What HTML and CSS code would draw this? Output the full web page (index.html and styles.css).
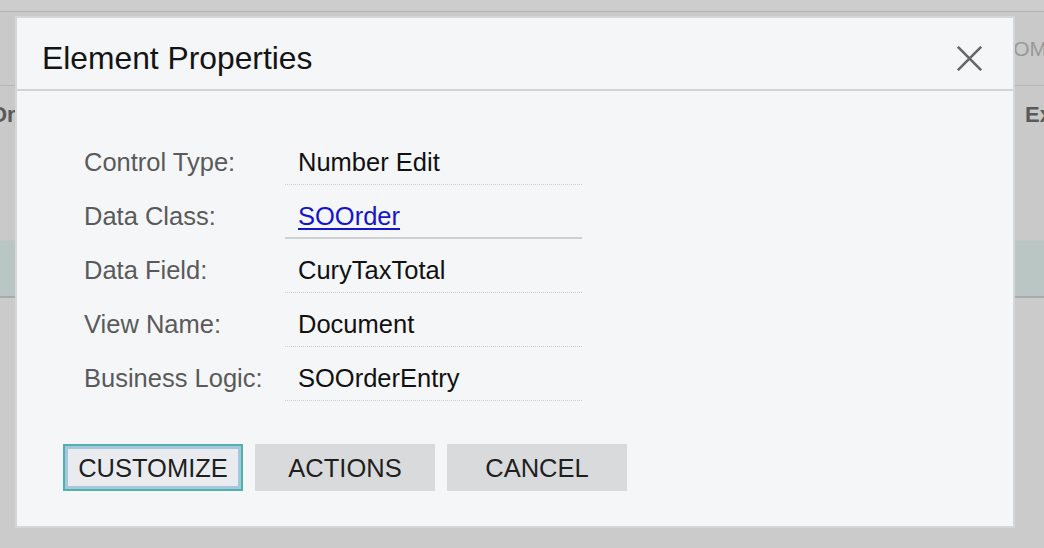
FILE: index.html
```html
<!DOCTYPE html>
<html lang="en">
<head>
<meta charset="utf-8">
<title>Element Properties</title>
<link rel="stylesheet" href="styles.css">
</head>
<body>
<div class="page">
  <div class="bg-top"></div>
  <div class="bg-head"><span class="bg-head-text">OM</span></div>
  <div class="bg-row"><span class="bg-left">Or</span><span class="bg-right">Ex</span></div>
  <div class="bg-band"></div>
  <div class="bg-rest"></div>
</div>

<div class="modal" role="dialog" aria-label="Element Properties">
  <div class="modal-header">
    <h1 class="modal-title">Element Properties</h1>
    <button class="close-btn" aria-label="Close">
      <svg width="25" height="25" viewBox="0 0 25 25"><path d="M0.8 0.8 L24.2 24.2 M24.2 0.8 L0.8 24.2" stroke="#666" stroke-width="2.6" fill="none"/></svg>
    </button>
  </div>
  <div class="modal-body">
    <div class="row"><div class="label">Control Type:</div><div class="value">Number Edit</div></div>
    <div class="row"><div class="label">Data Class:</div><div class="value value-solid"><a class="link" href="#">SOOrder</a></div></div>
    <div class="row"><div class="label">Data Field:</div><div class="value">CuryTaxTotal</div></div>
    <div class="row"><div class="label">View Name:</div><div class="value">Document</div></div>
    <div class="row"><div class="label">Business Logic:</div><div class="value">SOOrderEntry</div></div>
  </div>
  <div class="modal-footer">
    <button class="btn btn-focus">CUSTOMIZE</button>
    <button class="btn">ACTIONS</button>
    <button class="btn">CANCEL</button>
  </div>
</div>
</body>
</html>
```

FILE: styles.css
```css
* { box-sizing: border-box; }
html, body { margin: 0; padding: 0; }
body {
  width: 1044px;
  height: 548px;
  overflow: hidden;
  background: #cbcbcb;
  font-family: "Liberation Sans", Arial, sans-serif;
  position: relative;
}

/* background page behind the modal */
.page { width: 1044px; }
.bg-top {
  height: 12px;
  background: #cdcdcd;
  border-bottom: 1px solid #b3b3b3;
}
.bg-head {
  height: 74px;
  background: #c8c9c8;
  border-bottom: 1px solid #b5b5b5;
  display: flex;
  justify-content: flex-end;
  padding-top: 25px;
}
.bg-head-text {
  font-size: 21px;
  line-height: 24px;
  color: #999;
  margin-right: -3px;
}
.bg-row {
  height: 154px;
  background: #c8c9c8;
  display: flex;
  justify-content: space-between;
  padding-top: 16px;
  font-size: 22px;
  line-height: 26px;
  font-weight: bold;
  color: #595959;
}
.bg-left { margin-left: -10px; }
.bg-right { margin-right: -8px; }
.bg-band {
  height: 58px;
  background: #b9c6c3;
  border-top: 1px solid #c3c6c5;
  border-bottom: 2px solid #a9abab;
}
.bg-rest { height: 250px; background: #cbcbcb; }

/* modal */
.modal {
  position: absolute;
  left: 15px;
  top: 16px;
  width: 1000px;
  height: 512px;
  background: #f5f6f8;
  border: 2px solid #d5d6d8;
}
.modal-header {
  height: 73px;
  border-bottom: 2px solid #d3d4d6;
  display: flex;
  align-items: center;
  justify-content: space-between;
  padding: 9px 31px 0 25px;
}
.modal-title {
  margin: 0;
  font-size: 31.8px;
  line-height: 36px;
  font-weight: normal;
  color: #141414;
}
.close-btn {
  border: 0;
  padding: 0;
  background: transparent;
  width: 25px;
  height: 25px;
  display: flex;
}

.modal-body {
  padding: 40px 0 0 67px;
}
.row {
  display: grid;
  grid-template-columns: 201px 297px;
  height: 54px;
  font-size: 25.5px;
  line-height: 30px;
}
.label, .value {
  align-self: end;
  padding-bottom: 7px;
  border-bottom: 1px solid transparent;
}
.label { color: #5a5a5a; }
.value {
  color: #111;
  padding-left: 13px;
  border-bottom: 1px dotted #cdced1;
}
.value-solid {
  border-bottom: 2px solid #cfd0d2;
  padding-bottom: 6px;
}
.link { color: #1515cc; text-decoration: underline; text-underline-offset: 3px; }

.modal-footer {
  display: flex;
  gap: 12px;
  padding-left: 46px;
  margin-top: 43px;
}
.btn {
  width: 180px;
  height: 47px;
  border: 0;
  background: #d9dadc;
  color: #1f1f1f;
  font-family: "Liberation Sans", Arial, sans-serif;
  font-size: 25.5px;
  line-height: 30px;
  padding: 0;
}
.btn-focus {
  background: #e9ebee;
  border: 2px solid #53b2a8;
  box-shadow: inset 0 0 0 3px #a4c6df;
}
```
